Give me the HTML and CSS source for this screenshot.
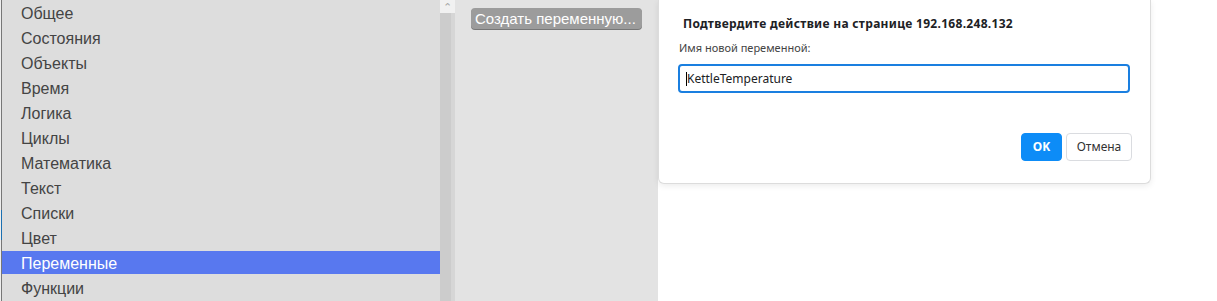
FILE: index.html
```html
<html>
<head>
<title>Блоки</title>
<meta name="viewport" content="width=device-width">
<link rel="stylesheet" href="styles.css">
</head>
<body>

<div class="workspace">
  <div class="edge"></div>
  <div class="toolbox">
    <div class="cat">Общее</div>
    <div class="cat">Состояния</div>
    <div class="cat">Объекты</div>
    <div class="cat">Время</div>
    <div class="cat">Логика</div>
    <div class="cat">Циклы</div>
    <div class="cat">Математика</div>
    <div class="cat">Текст</div>
    <div class="cat">Списки</div>
    <div class="cat">Цвет</div>
    <div class="cat selected">Переменные</div>
    <div class="cat">Функции</div>
  </div>
  <div class="scrollbar">
    <div class="scroll-up">&#8963;</div>
    <div class="scroll-track"></div>
  </div>
  <div class="flyout">
    <div class="flyout-btn">Создать переменную...</div>
  </div>
  <div class="canvas"></div>
</div>

<div class="dialog">
  <div class="dialog-title">Подтвердите действие на странице 192.168.248.132</div>
  <div class="dialog-msg">Имя новой переменной:</div>
  <div class="dialog-input"><span class="caret"></span>KettleTemperature</div>
  <div class="dialog-buttons">
    <div class="btn btn-ok">OK</div>
    <div class="btn btn-cancel">Отмена</div>
  </div>
</div>

</body>
</html>
```

FILE: styles.css
```css
* {
  box-sizing: border-box;
}

body {
  margin: 0;
  background: #fff;
  font-family: "Liberation Sans", Arial, sans-serif;
  overflow: hidden;
}

.workspace {
  display: flex;
  height: 301px;
}

.edge {
  width: 2px;
  background: linear-gradient(to bottom, #777 0, #777 210px, #1a6fb0 210px, #1a6fb0 240px, #777 240px);
  border-left: 1px solid #eee;
}

.toolbox {
  width: 438px;
  background: #dddddd;
  padding-top: 1px;
}

.cat {
  height: 23px;
  margin-bottom: 2px;
  padding-left: 19px;
  font-size: 16px;
  line-height: 25px;
  color: #444;
  white-space: nowrap;
}

.cat.selected {
  background: #5878ef;
  color: #fff;
}

.scrollbar {
  width: 15px;
  display: flex;
  flex-direction: column;
}

.scroll-up {
  height: 13px;
  background: #f1f1f1;
  color: #a8a8a8;
  font-size: 11px;
  line-height: 15px;
  text-align: center;
}

.scroll-track {
  flex: 1;
  background: linear-gradient(to right, #cccccc 0, #cccccc 11px, #d6d6d6 11px);
}

.flyout {
  width: 203px;
  background: #e3e3e3;
  padding: 8px 0 0 16px;
}

.flyout-btn {
  display: inline-block;
  width: 171px;
  height: 21px;
  padding: 0 4px;
  background: #9c9c9c;
  border-radius: 4px;
  box-shadow: 0 1px 0 #777;
  color: #fff;
  font-size: 15px;
  line-height: 21px;
  white-space: nowrap;
}

.canvas {
  flex: 1;
  background: #fff;
}

.dialog {
  position: absolute;
  left: 658px;
  top: 0;
  width: 493px;
  height: 184px;
  background: #fff;
  border: 1px solid #dcdcdc;
  border-top: none;
  border-radius: 0 0 6px 6px;
  box-shadow: 0 2px 6px rgba(0, 0, 0, 0.08);
  padding: 14px 19px 0 19px;
  font-family: "Segoe UI", "Noto Sans", "Open Sans", sans-serif;
  color: #202124;
}

.dialog-title {
  padding-left: 5px;
  font-size: 12px;
  font-weight: bold;
  letter-spacing: 0.3px;
  line-height: 20px;
}

.dialog-msg {
  margin-top: 4px;
  padding-left: 1px;
  font-size: 11px;
  line-height: 20px;
  color: #444;
}

.dialog-input {
  margin-top: 6px;
  width: 452px;
  height: 29px;
  border: 2px solid #1a7fe0;
  border-radius: 4px;
  padding-left: 6px;
  font-size: 12px;
  line-height: 25px;
  color: #202124;
  display: flex;
  align-items: center;
}

.caret {
  display: inline-block;
  width: 1px;
  height: 14px;
  background: #000;
}

.dialog-buttons {
  display: flex;
  justify-content: flex-end;
  gap: 4px;
  margin-top: 40px;
  width: 454px;
}

.btn {
  height: 28px;
  border-radius: 4px;
  font-size: 12px;
  line-height: 26px;
  text-align: center;
}

.btn-ok {
  width: 41px;
  background: #0d8cf7;
  border: 1px solid #0d8cf7;
  color: #fff;
  font-weight: bold;
}

.btn-cancel {
  width: 66px;
  background: #fff;
  border: 1px solid #dadce0;
  color: #333;
}
```
